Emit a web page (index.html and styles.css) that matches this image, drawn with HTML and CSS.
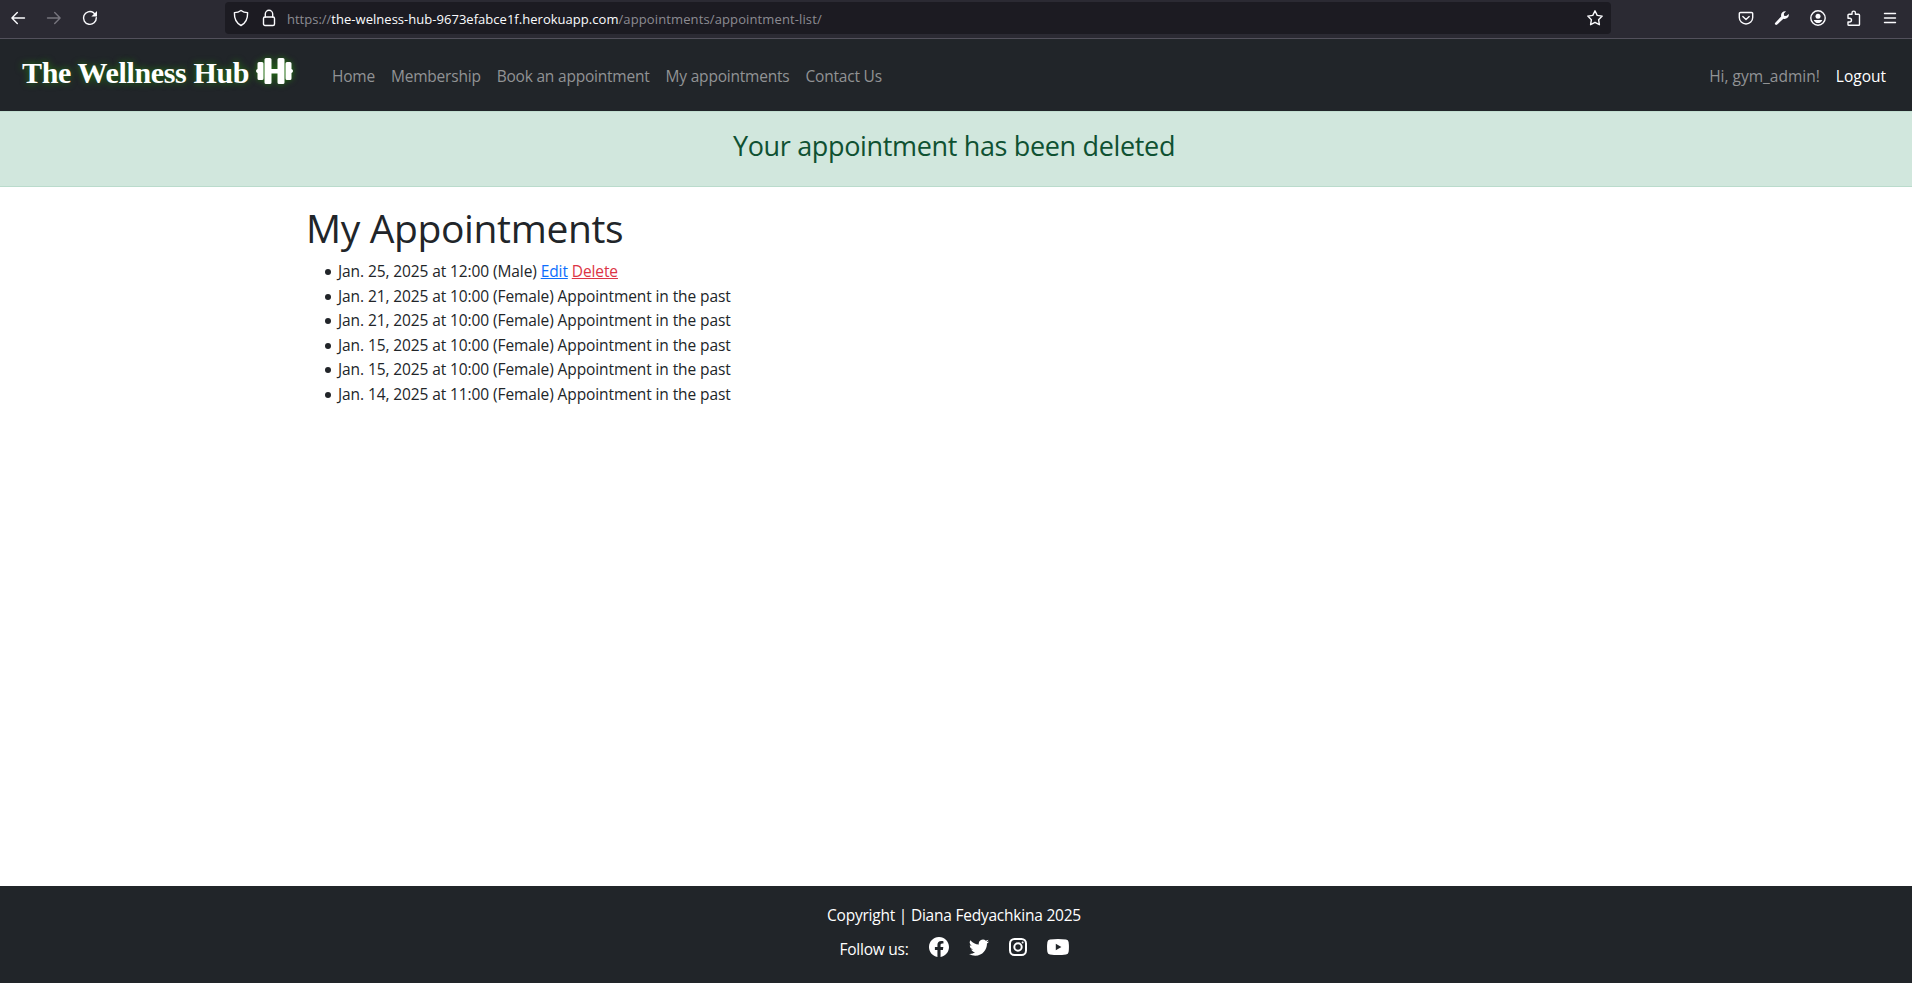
FILE: index.html
```html
<!DOCTYPE html>
<html lang="en">
<head>
<meta charset="utf-8">
<title>The Wellness Hub</title>
<link rel="stylesheet" href="styles.css">
</head>
<body>
<header class="browser">
  <div class="history">
    <svg width="16" height="16" viewBox="0 0 16 16" class="ico"><path d="M14.500 8H2M7.300 2.600L1.900 8l5.400 5.400"/></svg>
    <svg width="16" height="16" viewBox="0 0 16 16" class="ico dim"><path d="M1.500 8H14M8.700 2.600L14.100 8l-5.400 5.400"/></svg>
    <svg width="16" height="16" viewBox="0 0 16 16" class="ico"><path d="M14.300 7.800A6.400 6.400 0 1 1 11.500 2.700L13.400 4.600"/><path class="solid" d="M15 .9v5.600H9.400z"/></svg>
  </div>
  <div class="urlbar">
    <svg width="16" height="18" viewBox="0 0 16 18" class="ico"><path d="M8 1.500C6 3.100 3.600 3.600 1.400 3.600C1.200 9.400 2.800 14 8 16.500C13.200 14 14.800 9.400 14.600 3.600C12.400 3.600 10 3.100 8 1.500z"/></svg>
    <svg width="14" height="18" viewBox="0 0 14 18" class="ico lock"><rect x="1.500" y="8" width="11" height="8.500" rx="1.500"/><path d="M3.300 8V5a3.700 3.700 0 0 1 7.400 0v3"/></svg>
    <p class="url"><span>https://</span><span class="host">the-welness-hub-9673efabce1f.herokuapp.com</span><span class="path">/appointments/appointment-list/</span></p>
    <svg width="18" height="18" viewBox="0 0 18 18" class="ico"><path d="M9 1.800l2.200 4.600 5 .7-3.600 3.600.8 5L9 13.300l-4.400 2.400.8-5L1.800 7.100l5-.7z"/></svg>
  </div>
  <div class="tools">
    <svg width="16" height="16" viewBox="0 0 16 16" class="ico"><path d="M2.500 2.500h11a1.200 1.200 0 0 1 1.200 1.200V7.500a6.700 6.500 0 0 1-13.400 0V3.700a1.200 1.200 0 0 1 1.200-1.200z"/><path d="M4.800 6.600L8 9.500l3.200-2.900"/></svg>
    <svg width="16" height="16" viewBox="0 0 16 16" class="ico"><path class="solid" d="M14.800 3.900L12.200 6 10 5.700 9.900 3.600 12 1.200A4.300 4.300 0 0 0 7.200 6.500L1.300 12.700a1.300 1.300 0 0 0 1.900 1.900L9.400 8.800A4.300 4.300 0 0 0 14.800 3.900z"/></svg>
    <svg width="16" height="16" viewBox="0 0 16 16" class="ico"><circle cx="8" cy="8" r="7.200"/><circle class="solid" cx="8" cy="6.200" r="2.500"/><path class="solid" d="M3.700 9.900h8.600c-.7 2-2.300 3.100-4.300 3.100s-3.600-1.100-4.300-3.100z"/></svg>
    <svg width="16" height="16" viewBox="0 0 16 16" class="ico"><path d="M2 7V5.200a1 1 0 0 1 1-1h3V2.800a1.700 1.700 0 0 1 3.400 0v1.400h3.100a1 1 0 0 1 1 1V14.500a.8.800 0 0 1-.8.800H2.800a.8.800 0 0 1-.8-.8V12h1.600a1.900 1.900 0 0 0 0-3.800H2z"/></svg>
    <svg width="16" height="16" viewBox="0 0 16 16" class="ico"><path d="M2.500 3.500h11M2.500 8h11M2.500 12.500h11"/></svg>
  </div>
</header>
<nav class="navbar">
  <a class="brand"><span class="brand-name">The Wellness Hub</span>
    <svg class="dumbbell" width="37" height="26" viewBox="0 0 37 26"><path d="M10 0h4q1.500 0 1.500 1.500V11h6V1.500Q21.500 0 23 0h4q1.500 0 1.500 1.500v23Q28.500 26 27 26h-4q-1.500 0-1.500-1.500V15.500h-6v9Q15.500 26 14 26h-4q-1.500 0-1.500-1.500v-23Q8.500 0 10 0zM3 4h3q1.500 0 1.500 1.500v15Q7.500 22 6 22H3q-1.500 0-1.500-1.500V15Q0 14.500 0 13t1.500-2V5.500Q1.500 4 3 4zM31 4h3q1.500 0 1.500 1.500V11Q37 11.500 37 13t-1.500 2v5.500Q35.500 22 34 22h-3q-1.500 0-1.500-1.500v-15Q29.500 4 31 4z"/></svg>
  </a>
  <div class="links">
    <a>Home</a><a>Membership</a><a>Book an appointment</a><a>My appointments</a><a>Contact Us</a>
  </div>
  <div class="account"><span>Hi, gym_admin!</span><a class="logout">Logout</a></div>
</nav>
<div class="alert">Your appointment has been deleted</div>
<main class="content">
  <h1>My Appointments</h1>
  <ul>
    <li><span>Jan. 25, 2025 at 12:00 (Male) <a class="edit">Edit</a> <a class="delete">Delete</a></span></li>
    <li>Jan. 21, 2025 at 10:00 (Female) Appointment in the past</li>
    <li>Jan. 21, 2025 at 10:00 (Female) Appointment in the past</li>
    <li>Jan. 15, 2025 at 10:00 (Female) Appointment in the past</li>
    <li>Jan. 15, 2025 at 10:00 (Female) Appointment in the past</li>
    <li>Jan. 14, 2025 at 11:00 (Female) Appointment in the past</li>
  </ul>
</main>
<footer class="footer">
  <p>Copyright | Diana Fedyachkina 2025</p>
  <div class="follow"><span>Follow us:</span>
    <svg width="20" height="20" viewBox="0 0 16 16"><path d="M16 8.049c0-4.446-3.582-8.050-8-8.050C3.580 0-.002 3.603-.002 8.050c0 4.017 2.926 7.347 6.750 7.951v-5.625h-2.030V8.050H6.750V6.275c0-2.017 1.195-3.131 3.022-3.131.876 0 1.791.157 1.791.157v1.980h-1.009c-.993 0-1.303.621-1.303 1.258v1.510h2.218l-.354 2.326H9.250V16c3.824-.604 6.750-3.934 6.750-7.951z"/></svg>
    <svg width="20" height="20" viewBox="0 0 16 16"><path d="M5.026 15c6.038 0 9.341-5.003 9.341-9.334q.002-.211-.006-.422A6.700 6.700 0 0 0 16 3.542a6.700 6.700 0 0 1-1.889.518 3.300 3.300 0 0 0 1.447-1.817 6.500 6.500 0 0 1-2.087.793A3.286 3.286 0 0 0 7.875 6.030a9.320 9.320 0 0 1-6.767-3.429 3.290 3.290 0 0 0 1.018 4.382A3.300 3.300 0 0 1 .640 6.575v.045a3.290 3.290 0 0 0 2.632 3.218 3.200 3.200 0 0 1-.865.115 3 3 0 0 1-.614-.057 3.280 3.280 0 0 0 3.067 2.277A6.600 6.600 0 0 1 .780 13.580a6 6 0 0 1-.780-.045A9.340 9.340 0 0 0 5.026 15"/></svg>
    <svg width="18" height="18" viewBox="0 0 18 18" class="insta"><rect x="1" y="1" width="16" height="16" rx="4.500"/><circle cx="9" cy="9" r="3.700"/><circle class="solid" cx="13.600" cy="4.400" r="1"/></svg>
    <svg width="22" height="16" viewBox="0 0 22 16"><path fill-rule="evenodd" d="M3 .5Q11-.5 19 .5q2.300.3 2.600 2.500.7 5 0 10-.3 2.200-2.600 2.500-8 1-16 0Q.7 15.200.4 13-.3 8 .4 3 .7.800 3 .500zM8.800 4.800v6.400L14.400 8z"/></svg>
  </div>
</footer>
</body>
</html>
```
FILE: styles.css
```css
* { box-sizing: border-box; }
body { margin: 0; height: 983px; overflow: hidden; display: flex; flex-direction: column; background: #fff; color: #212529; font: 15.5px/24.5px "Open Sans", "Noto Sans", sans-serif; white-space: nowrap; }
svg { display: block; flex: none; fill: #fff; }
p { margin: 0; }
.ico { fill: none; stroke: #fbfbfe; stroke-width: 1.4; stroke-linecap: round; stroke-linejoin: round; }
.solid { fill: #fbfbfe; stroke: none; }
.dim { stroke: #77757e; }

.browser { flex: none; height: 39px; display: flex; background: #2b2a33; border-bottom: 1px solid #53515c; }
.history { width: 225px; padding: 10px 0 0 10px; display: flex; gap: 20px; }
.urlbar { width: 1386px; height: 32px; margin-top: 2px; padding: 0 7px 0 8px; display: flex; align-items: center; background: #1c1b22; border-radius: 4px; }
.lock { margin-left: 13px; }
.url { margin-left: 11px; flex: 1; font-size: 13px; line-height: 20px; padding-top: 2px; color: #8c8b92; }
.host { color: #fbfbfe; letter-spacing: 0.03px; }
.path { letter-spacing: 0.12px; }
.tools { margin-left: auto; padding: 10px 14px 0 0; display: flex; gap: 20px; }

.navbar { flex: none; height: 72px; display: flex; background: #212529; color: #919395; }
.brand { width: 310px; padding: 19px 0 0 22px; display: flex; color: #fff; }
.brand-name { width: 234px; margin-top: -2px; font: bold 30px/34px "Liberation Serif", serif; letter-spacing: -0.36px; text-shadow: 0 0 7px #237a10; }
.dumbbell { overflow: visible; filter: drop-shadow(0 0 3px #237a10); }
.links { padding: 25px 0 0 22px; display: flex; gap: 16px; letter-spacing: -0.21px; }
.account { margin-left: auto; padding: 25px 26px 0 0; display: flex; gap: 16px; }
.logout { color: #fff; }

.alert { flex: none; height: 76px; padding: 16px 4px 0 0; border-top: 1px solid #c2dfd1; border-bottom: 1px solid #badbcc; background: #d1e7dd; color: #0f5132; text-align: center; font-size: 27px; line-height: 36px; letter-spacing: -0.34px; }

.content { flex: 1; min-height: 0; padding: 17px 0 0 306px; }
h1 { margin: 0; height: 55px; font-size: 39px; line-height: 48px; font-weight: 400; letter-spacing: -0.36px; }
ul { margin: 0; padding: 0 0 0 32px; list-style: none; letter-spacing: -0.1px; }
li { display: flex; }
li::before { content: ""; width: 6px; height: 6px; margin: 10px 7.5px 0 -13.5px; border-radius: 50%; background: #212529; }
.edit, .delete { text-decoration: underline; color: #0d6efd; }
.delete { color: #dc3545; }

.footer { flex: none; height: 97px; padding: 17px 4px 0 0; background: #212529; color: #fff; text-align: center; letter-spacing: -0.23px; }
.follow { margin-top: 9px; display: flex; align-items: center; justify-content: center; gap: 20px; }
.follow svg { margin-top: -3px; }
.insta { fill: none; stroke: #fff; stroke-width: 2; }
```
